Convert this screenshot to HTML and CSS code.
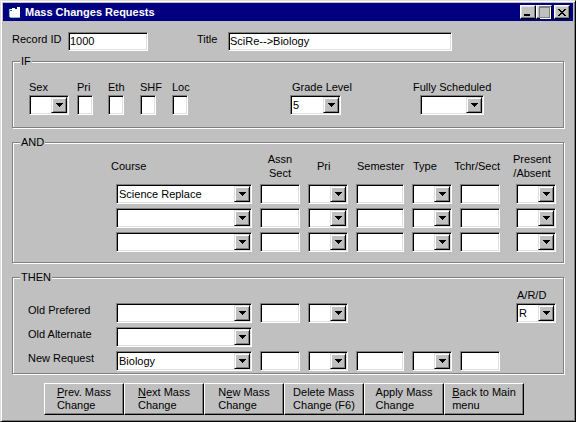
FILE: index.html
```html
<!DOCTYPE html>
<html lang="en">
  <head>
    <meta charset="UTF-8" />
    <meta name="viewport" content="width=device-width, initial-scale=1.0" />
    <title>Mass Changes Requests</title>
    <link rel="stylesheet" href="styles.css">
  </head>
  <body>
    <div class="window">
      <div class="titlebar">
        <svg class="titlebar__icon" width="16" height="16" viewBox="0 0 16 16" shape-rendering="crispEdges">
          <path d="M2 5h3V4h3v1h5v9H3V13H2z" fill="#fff" />
          <path d="M2 5h1v8H2zM3 13h10v1H3z" fill="#80c0c0" />
          <path d="M10 3h3v2h-3z" fill="#fff" />
          <path d="M3 6h2v1H3z" fill="#008080" />
        </svg>
        <span class="titlebar__text">Mass Changes Requests</span>
        <div class="titlebar__btns">
          <span class="tbtn tbtn--min"></span>
          <span class="tbtn tbtn--max"></span>
          <span class="tbtn tbtn--close">
            <svg width="8" height="7" viewBox="0 0 8 7" shape-rendering="crispEdges">
              <path d="M0 0h2v1H0zM6 0h2v1H6zM1 1h2v1H1zM5 1h2v1H5zM2 2h4v1H2zM3 3h2v1H3zM2 4h4v1H2zM1 5h2v1H1zM5 5h2v1H5zM0 6h2v1H0zM6 6h2v1H6z" />
            </svg>
          </span>
        </div>
      </div>

      <main class="content">
        <div class="top-row">
          <span class="top-row__label">Record ID</span>
          <div class="field field--record">1000</div>
          <span class="top-row__label top-row__label--title">Title</span>
          <div class="field field--title">SciRe--&gt;Biology</div>
        </div>

        <!-- IF -->
        <section class="group group--if">
          <span class="group__title">IF</span>
          <div class="opt opt--sex">
            <span class="opt__label">Sex</span>
            <div class="combo combo--40"><span class="combo__val"></span><span class="combo__btn"></span></div>
          </div>
          <div class="opt opt--box opt--pri">
            <span class="opt__label">Pri</span>
            <div class="field field--box"></div>
          </div>
          <div class="opt opt--box opt--eth">
            <span class="opt__label">Eth</span>
            <div class="field field--box"></div>
          </div>
          <div class="opt opt--box">
            <span class="opt__label">SHF</span>
            <div class="field field--box"></div>
          </div>
          <div class="opt opt--box">
            <span class="opt__label">Loc</span>
            <div class="field field--box"></div>
          </div>
          <div class="opt opt--grade">
            <span class="opt__label">Grade Level</span>
            <div class="combo combo--grade"><span class="combo__val">5</span><span class="combo__btn"></span></div>
          </div>
          <div class="opt opt--full">
            <span class="opt__label">Fully Scheduled</span>
            <div class="combo combo--full"><span class="combo__val"></span><span class="combo__btn"></span></div>
          </div>
        </section>

        <!-- AND -->
        <section class="group group--and grid">
          <span class="group__title">AND</span>
          <span class="head head--course">Course</span>
          <span class="head head--center">Assn<br>Sect</span>
          <span class="head head--pri">Pri</span>
          <span class="head head--left">Semester</span>
          <span class="head head--left">Type</span>
          <span class="head head--tchr">Tchr/Sect</span>
          <span class="head head--center">Present<br>/Absent</span>

          <div class="combo combo--course"><span class="combo__val">Science Replace</span><span class="combo__btn"></span></div>
          <div class="field field--40"></div>
          <div class="combo combo--40"><span class="combo__val"></span><span class="combo__btn"></span></div>
          <div class="field field--48"></div>
          <div class="combo combo--40"><span class="combo__val"></span><span class="combo__btn"></span></div>
          <div class="field field--40"></div>
          <div class="combo combo--40 combo--last"><span class="combo__val"></span><span class="combo__btn"></span></div>

          <div class="combo combo--course"><span class="combo__val"></span><span class="combo__btn"></span></div>
          <div class="field field--40"></div>
          <div class="combo combo--40"><span class="combo__val"></span><span class="combo__btn"></span></div>
          <div class="field field--48"></div>
          <div class="combo combo--40"><span class="combo__val"></span><span class="combo__btn"></span></div>
          <div class="field field--40"></div>
          <div class="combo combo--40 combo--last"><span class="combo__val"></span><span class="combo__btn"></span></div>

          <div class="combo combo--course"><span class="combo__val"></span><span class="combo__btn"></span></div>
          <div class="field field--40"></div>
          <div class="combo combo--40"><span class="combo__val"></span><span class="combo__btn"></span></div>
          <div class="field field--48"></div>
          <div class="combo combo--40"><span class="combo__val"></span><span class="combo__btn"></span></div>
          <div class="field field--40"></div>
          <div class="combo combo--40 combo--last"><span class="combo__val"></span><span class="combo__btn"></span></div>
        </section>

        <!-- THEN -->
        <section class="group group--then grid">
          <span class="group__title">THEN</span>
          <span class="head head--ard">A/R/D</span>

          <span class="row-label">Old Prefered</span>
          <div class="combo combo--course"><span class="combo__val"></span><span class="combo__btn"></span></div>
          <div class="field field--40"></div>
          <div class="combo combo--40"><span class="combo__val"></span><span class="combo__btn"></span></div>
          <div class="combo combo--40 combo--last"><span class="combo__val">R</span><span class="combo__btn"></span></div>

          <span class="row-label">Old Alternate</span>
          <div class="combo combo--course"><span class="combo__val"></span><span class="combo__btn"></span></div>

          <span class="row-label">New Request</span>
          <div class="combo combo--course"><span class="combo__val">Biology</span><span class="combo__btn"></span></div>
          <div class="field field--40"></div>
          <div class="combo combo--40"><span class="combo__val"></span><span class="combo__btn"></span></div>
          <div class="field field--48"></div>
          <div class="combo combo--40"><span class="combo__val"></span><span class="combo__btn"></span></div>
          <div class="field field--40"></div>
        </section>

        <div class="actions">
          <button class="btn"><span><u>P</u>rev. Mass<br>Change</span></button>
          <button class="btn"><span><u>N</u>ext Mass<br>Change</span></button>
          <button class="btn"><span>N<u>e</u>w Mass<br>Change</span></button>
          <button class="btn"><span>Delete Mass<br>Change (F6)</span></button>
          <button class="btn"><span>Apply Mass<br>Change</span></button>
          <button class="btn"><span><u>B</u>ack to Main<br>menu</span></button>
        </div>
      </main>
    </div>
  </body>
</html>
```

FILE: styles.css
```css
* {
  margin: 0;
  padding: 0;
  box-sizing: border-box;
}

html,
body {
  background-color: #c0c0c0;
}

body {
  font-family: 'Liberation Sans', Arial, sans-serif;
  font-size: 11px;
  line-height: 14px;
  color: #000;
}

/* window frame */
.window {
  width: 576px;
  height: 422px;
  padding: 2px;
  background-color: #c0c0c0;
  border: 1px solid;
  border-color: #dfdfdf #000 #000 #dfdfdf;
  box-shadow: inset 1px 1px #fff, inset -1px -1px #808080;

  display: flex;
  flex-direction: column;
}

.titlebar {
  height: 18px;
  padding: 0 3px 0 4px;
  background-color: #000080;
  color: #fff;

  display: flex;
  align-items: center;
}

.titlebar__icon {
  flex: none;
}

.titlebar__text {
  margin-left: 2px;
  font-weight: bold;
  white-space: nowrap;
}

.titlebar__btns {
  margin-left: auto;
  display: flex;
}

.tbtn {
  width: 16px;
  height: 14px;
  background-color: #c0c0c0;
  border: 1px solid;
  border-color: #fff #000 #000 #fff;
  box-shadow: inset -1px -1px #808080, inset 1px 1px #dfdfdf;

  display: flex;
  align-items: center;
  justify-content: center;
}

.tbtn--min {
  align-items: flex-end;
  justify-content: flex-start;
  padding: 0 0 2px 3px;
}

.tbtn--min::after {
  content: '';
  width: 6px;
  height: 2px;
  background-color: #000;
}

.tbtn--max::after {
  content: '';
  width: 9px;
  height: 9px;
  border: 1px solid #808080;
  border-top-width: 2px;
  box-shadow: 1px 1px 0 #fff;
}

.tbtn--close {
  margin-left: 2px;
}

/* content */
.content {
  padding: 11px 0 0 9px;
  display: flex;
  flex-direction: column;
}

.top-row {
  display: flex;
  align-items: flex-start;
}

.top-row__label {
  width: 56px;
  white-space: nowrap;
}

.top-row__label--title {
  width: 31px;
  margin-left: 49px;
}

/* sunken edit box */
.field {
  height: 20px;
  padding: 0 1px;
  background-color: #fff;
  border: 1px solid;
  border-color: #808080 #fff #fff #808080;
  box-shadow: inset 1px 1px #000, inset -1px -1px #dfdfdf;
  line-height: 18px;
  white-space: nowrap;
  overflow: hidden;
}

.field--record {
  width: 80px;
  height: 19px;
  line-height: 17px;
}

.field--title {
  width: 224px;
  height: 19px;
  line-height: 17px;
}

.field--box {
  width: 16px;
}

.field--40 {
  width: 40px;
}

.field--48 {
  width: 48px;
}

/* combo box */
.combo {
  height: 20px;
  padding: 1px;
  background-color: #fff;
  border: 1px solid;
  border-color: #808080 #fff #fff #808080;
  box-shadow: inset 1px 1px #000, inset -1px -1px #dfdfdf;

  display: flex;
}

.combo__val {
  flex: 1;
  padding-left: 1px;
  line-height: 16px;
  white-space: nowrap;
  overflow: hidden;
}

.combo__btn {
  flex: none;
  width: 16px;
  height: 16px;
  background-color: #c0c0c0;
  border: 1px solid;
  border-color: #dfdfdf #000 #000 #dfdfdf;
  box-shadow: inset 1px 1px #fff, inset -1px -1px #808080;

  display: flex;
  align-items: center;
  justify-content: center;
}

.combo__btn::after {
  content: '';
  width: 7px;
  height: 4px;
  background:
    linear-gradient(#000, #000) 0 0 / 7px 1px no-repeat,
    linear-gradient(#000, #000) 1px 1px / 5px 1px no-repeat,
    linear-gradient(#000, #000) 2px 2px / 3px 1px no-repeat,
    linear-gradient(#000, #000) 3px 3px / 1px 1px no-repeat;
}

.combo--40 {
  width: 40px;
}

.combo--grade {
  width: 51px;
}

.combo--full {
  width: 64px;
  margin-left: 7px;
}

.combo--course {
  grid-column: 2;
  width: 136px;
}

.combo--last {
  grid-column: 8;
  justify-self: end;
}

/* group boxes */
.group {
  position: relative;
  width: 552px;
  border: 1px solid #808080;
  box-shadow: 1px 1px 0 #fff, inset 1px 1px 0 #fff;
}

.group__title {
  position: absolute;
  top: -8px;
  left: 7px;
  padding: 0 1px;
  background-color: #c0c0c0;
}

.group--if {
  height: 67px;
  margin-top: 10px;
  padding: 18px 0 0 16px;
  display: flex;
  align-items: flex-start;
}

.opt {
  flex: none;
  display: flex;
  flex-direction: column;
  align-items: flex-start;
}

.opt__label {
  margin-bottom: 1px;
  white-space: nowrap;
}

.opt--sex {
  width: 40px;
}

.opt--box {
  width: 16px;
  margin-left: 16px;
}

.opt--pri {
  margin-left: 8px;
}

.opt--eth {
  margin-left: 15px;
}

.opt--grade {
  width: 51px;
  margin-left: 102px;
}

.opt--grade .opt__label {
  padding-left: 2px;
}

.opt--full {
  width: 71px;
  margin-left: 72px;
}

.grid {
  display: grid;
  grid-template-columns: 80px 136px 40px 40px 48px 40px 40px 48px;
  column-gap: 8px;
  row-gap: 4px;
  align-items: start;
  align-content: start;
}

.group--and {
  height: 121px;
  margin-top: 14px;
  padding: 9px 0 0 15px;
}

.group--then {
  height: 97px;
  margin-top: 14px;
  padding: 10px 0 0 15px;
}

.head {
  align-self: center;
  white-space: nowrap;
}

.head--course {
  grid-column: 2;
  margin-left: -5px;
}

.head--center {
  text-align: center;
}

.head--left {
  padding-left: 1px;
}

.head--pri {
  padding-left: 9px;
}

.head--tchr {
  margin-left: -10px;
  text-align: right;
}

.head--ard {
  grid-column: 8;
  align-self: start;
  margin-bottom: -3px;
  padding-left: 9px;
}

.row-label {
  grid-column: 1;
  white-space: nowrap;
}

/* command buttons */
.actions {
  margin: 9px 0 0 32px;
  display: flex;
}

.btn {
  width: 80px;
  height: 32px;
  font: inherit;
  line-height: 13px;
  color: #000;
  background-color: #c0c0c0;
  border: 1px solid;
  border-color: #fff #000 #000 #fff;
  box-shadow: inset -1px -1px #808080;

  display: flex;
  align-items: center;
  justify-content: center;
}

.btn span {
  text-align: left;
  white-space: nowrap;
}
```
